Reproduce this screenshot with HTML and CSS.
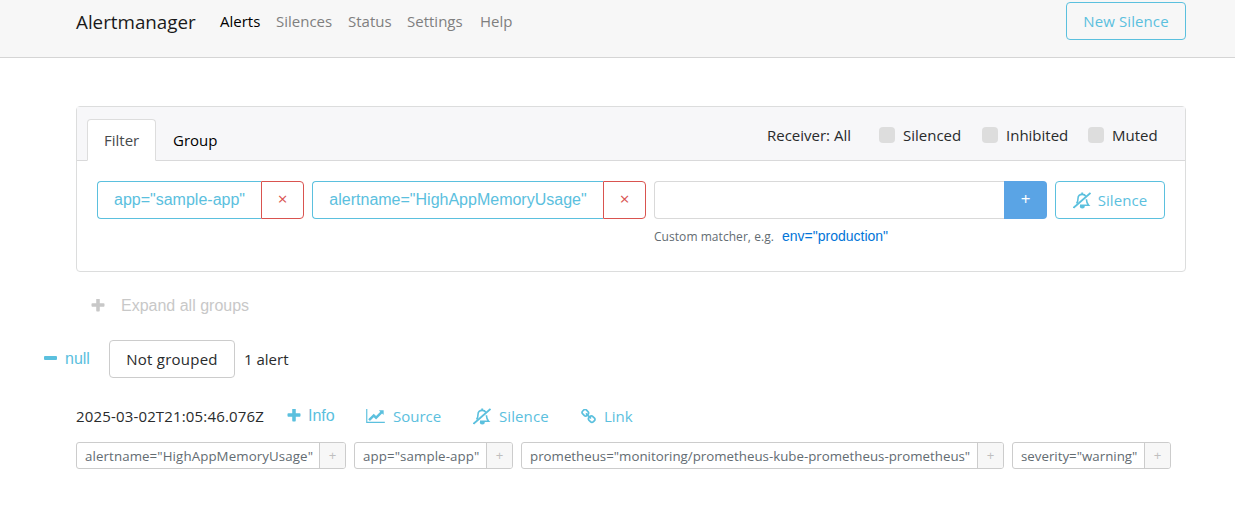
FILE: index.html
```html
<!DOCTYPE html>
<html lang="en">
<head>
<meta charset="utf-8">
<title>Alertmanager</title>
<link rel="stylesheet" href="styles.css">
</head>
<body>
<svg class="defs" aria-hidden="true">
  <symbol id="plus" viewBox="192 192 1408 1408"><path d="M1600 736v192q0 40-28 68t-68 28h-416v416q0 40-28 68t-68 28h-192q-40 0-68-28t-28-68v-416h-416q-40 0-68-28t-28-68v-192q0-40 28-68t68-28h416v-416q0-40 28-68t68-28h192q40 0 68 28t28 68v416h416q40 0 68 28t28 68z"/></symbol>
  <symbol id="minus" viewBox="0 0 13 4"><rect width="13" height="4" rx="1"/></symbol>
  <symbol id="chart" viewBox="0 128 2048 1536"><path d="M2048 1536v128h-2048v-1536h128v1408h1920zm-128-1248v435q0 21-19.5 29.5t-35.5-7.5l-121-121-633 633q-10 10-23 10t-23-10l-233-233-416 416-192-192 585-585q10-10 23-10t23 10l233 233 464-464-121-121q-16-16-7.5-35.5t29.5-19.5h435q14 0 23 9t9 23z"/></symbol>
  <symbol id="link" viewBox="64 64 1664 1664"><path d="M1520 1216q0-40-28-68l-208-208q-28-28-68-28-42 0-72 32 3 3 19 18.5t21.5 21.5 15 19 13 25.5 3.5 27.5q0 40-28 68t-68 28q-15 0-27.5-3.5t-25.5-13-19-15-21.5-21.5-18.5-19q-33 31-33 73 0 40 28 68l206 207q27 27 68 27 40 0 68-26l147-146q28-28 28-67zm-703-705q0-40-28-68l-206-207q-28-28-68-28-39 0-68 27l-147 146q-28 28-28 67 0 40 28 68l208 208q27 27 68 27 42 0 72-31-3-3-19-18.5t-21.5-21.5-15-19-13-25.5-3.5-27.5q0-40 28-68t68-28q15 0 27.5 3.5t25.5 13 19 15 21.5 21.5 18.5 19q33-31 33-73zm895 705q0 120-85 203l-147 146q-83 83-203 83-121 0-204-85l-206-207q-83-83-83-203 0-123 88-209l-88-88q-86 88-208 88-120 0-204-84l-208-208q-84-84-84-204t85-203l147-146q83-83 203-83 121 0 204 85l206 207q83 83 83 203 0 123-88 209l88 88q86-88 208-88 120 0 204 84l208 208q84 84 84 204z"/></symbol>
  <symbol id="bell-off" viewBox="0 0 18 17"><g fill="none" stroke="currentColor"><path d="M3.6 11.4C5 9.6 5 8 5 6.5C5 3.8 6.7 2.4 9.2 2.4C10.8 2.4 12.2 3.1 12.9 4.3M13.4 7.2C13.5 10 14.2 11.7 15.6 13.2H7" stroke-width="1.6"/><path d="M9.2 .5V2.4" stroke-width="1.9"/><path d="M.5 15.8 17.5 1" stroke-width="1.9"/></g><path d="M6.8 14H11.8A2.5 2.5 0 0 1 6.8 14Z"/></symbol>
</svg>

<header class="navbar">
  <a class="brand">Alertmanager</a>
  <nav class="nav">
    <a class="nav-alerts active">Alerts</a>
    <a class="nav-silences">Silences</a>
    <a class="nav-status">Status</a>
    <a class="nav-settings">Settings</a>
    <a class="nav-help">Help</a>
  </nav>
  <button class="btn new-silence">New Silence</button>
</header>

<main class="container">
  <section class="card">
    <div class="card-header">
      <div class="tabs">
        <a class="tab selected">Filter</a>
        <a class="tab group">Group</a>
      </div>
      <div class="options">
        <span class="receiver">Receiver: All</span>
        <label class="check silenced"><i class="box"></i><span>Silenced</span></label>
        <label class="check inhibited"><i class="box"></i><span>Inhibited</span></label>
        <label class="check muted"><i class="box"></i><span>Muted</span></label>
      </div>
    </div>
    <div class="card-body">
      <div class="chip"><button class="btn arial chip-app">app="sample-app"</button><button class="btn remove">×</button></div>
      <div class="chip"><button class="btn arial chip-name">alertname="HighAppMemoryUsage"</button><button class="btn remove">×</button></div>
      <div class="matcher">
        <div class="input-group"><input class="input" type="text"><button class="add">+</button></div>
        <small class="hint"><span class="hint-text">Custom matcher, e.g.</span><a class="example">env="production"</a></small>
      </div>
      <button class="btn silence-btn"><svg class="bell"><use href="#bell-off"/></svg><span>Silence</span></button>
    </div>
  </section>

  <div class="expand"><svg class="plus"><use href="#plus"/></svg><span>Expand all groups</span></div>

  <div class="group-row">
    <a class="null"><svg class="minus"><use href="#minus"/></svg><span>null</span></a>
    <span class="not-grouped">Not grouped</span>
    <span class="count">1 alert</span>
  </div>

  <div class="alert-row">
    <span class="time">2025-03-02T21:05:46.076Z</span>
    <a class="action info arial"><svg class="plus"><use href="#plus"/></svg><span>Info</span></a>
    <a class="action source"><svg class="chart"><use href="#chart"/></svg><span>Source</span></a>
    <a class="action silence"><svg class="bell"><use href="#bell-off"/></svg><span>Silence</span></a>
    <a class="action link"><svg class="chain"><use href="#link"/></svg><span>Link</span></a>
  </div>

  <div class="labels">
    <div class="label l-name"><span>alertname="HighAppMemoryUsage"</span><b>+</b></div>
    <div class="label l-app"><span>app="sample-app"</span><b>+</b></div>
    <div class="label l-prom"><span>prometheus="monitoring/prometheus-kube-prometheus-prometheus"</span><b>+</b></div>
    <div class="label l-sev"><span>severity="warning"</span><b>+</b></div>
  </div>
</main>
</body>
</html>
```
FILE: styles.css
```css
* { box-sizing: border-box; }
body {
  margin: 0;
  height: 505px;
  overflow: hidden;
  background: #fff;
  color: #292b2c;
  font: 15px/24px "Open Sans", "Noto Sans", sans-serif;
  white-space: nowrap;
}
.defs { display: none; }
svg { display: block; flex: none; fill: currentColor; }
button, input { font: inherit; margin: 0; padding: 0; }

.navbar {
  height: 58px;
  padding: 2px 49px 0 76px;
  display: flex;
  align-items: flex-start;
  background: #f7f7f7;
  border-bottom: 1px solid #d5d5d5;
}
.brand { width: 144px; padding-top: 8px; font-size: 18.8px; color: #1a1a1a; }
.nav { display: flex; padding-top: 7px; color: #7f7f7f; }
.active { color: #000; }
.nav-alerts { width: 56px; }
.nav-silences { width: 72px; }
.nav-status { width: 59px; }
.nav-settings { width: 73px; }

.btn {
  display: flex;
  align-items: center;
  justify-content: center;
  height: 38px;
  color: #5bc0de;
  background: transparent;
  border: 1px solid #5bc0de;
  border-radius: 4px;
}
.new-silence { width: 120px; margin-left: auto; letter-spacing: .1px; }
.arial { font-family: "Liberation Sans", Arial, sans-serif; font-size: 16px; }

.container { width: 1110px; margin: 48px 0 0 76px; }
.card { height: 166px; border: 1px solid #dcdddd; border-radius: 4px; }
.card-header {
  height: 54px;
  padding: 12px 26px 0 10px;
  display: flex;
  justify-content: space-between;
  background: #f7f7f9;
  border-bottom: 1px solid #d9d9da;
}
.tabs { display: flex; }
.tab { width: 69px; height: 42px; padding: 8px 16px; border: 1px solid transparent; color: #000; }
.selected { background: #fff; border-color: #ddd #ddd #fff; border-radius: 4px 4px 0 0; color: #464a4c; }
.options { display: flex; padding-top: 4px; }
.receiver { width: 112px; }
.check { display: flex; align-items: center; height: 24px; gap: 8px; }
.box { width: 16px; height: 16px; background: #ddd; border-radius: 4px; }
.silenced { width: 103px; }
.inhibited { width: 106px; }
.muted { width: 71px; }

.card-body { display: flex; align-items: flex-start; gap: 8px; padding: 20px; }
.chip { display: flex; }
.chip .btn:first-child { border-radius: 4px 0 0 4px; border-right: 0; }
.chip-app { width: 164px; }
.chip-name { width: 291px; }
.chip .remove { width: 43px; padding-bottom: 2px; color: #d9534f; border-color: #d9534f; border-radius: 0 4px 4px 0; font-size: 17px; }
.matcher { width: 393px; }
.input-group { display: flex; }
.input { width: 350px; height: 38px; border: 1px solid #d9d9d9; border-right: 0; border-radius: 4px 0 0 4px; background: #fff; outline: 0; }
.add { width: 43px; height: 38px; padding-bottom: 2px; border: 0; border-radius: 0 4px 4px 0; background: #5aa4e5; color: #fff; font-size: 17px; }
.hint { display: flex; padding-top: 5px; font-size: 12px; color: #636c72; }
.hint-text { width: 128px; padding-top: 1px; letter-spacing: .05px; }
.example { font: 14px/24px "Liberation Sans", Arial, sans-serif; color: #0275d8; }
.silence-btn { width: 110px; gap: 7px; }
.silence-btn, .silence { letter-spacing: .1px; }
.bell { width: 18px; height: 17px; }

.expand { display: flex; align-items: center; height: 24px; margin-top: 22px; padding-left: 15px; gap: 16px; color: #c8c8c8; font: 16px/24px "Liberation Sans", Arial, sans-serif; }
.plus { width: 14px; height: 13px; }
.expand .plus { margin-bottom: 2px; }
.group-row { display: flex; align-items: center; height: 38px; margin: 22px 0 0 -32px; }
.null { display: flex; align-items: center; width: 65px; gap: 8px; color: #5bc0de; font: 16px/24px "Liberation Sans", Arial, sans-serif; }
.minus { width: 13px; height: 4px; margin-bottom: 2px; }
.not-grouped { width: 126px; height: 38px; display: flex; align-items: center; justify-content: center; border: 1px solid #ccc; border-radius: 4px; letter-spacing: .25px; }
.count { padding-left: 9px; }

.alert-row { display: flex; height: 24px; margin-top: 26px; }
.time { width: 211px; letter-spacing: .16px; }
.action { display: flex; align-items: center; gap: 8px; color: #5bc0de; }
.info { width: 79px; gap: 7px; }
.info .plus { margin-bottom: 2px; }
.source { width: 107px; }
.chart { width: 19px; height: 14px; }
.silence { width: 108px; }
.chain { width: 15px; height: 15px; }

.labels { display: flex; gap: 8px; margin-top: 14px; }
.label { display: flex; height: 27px; border: 1px solid #ccc; border-radius: 3px; color: #636c72; font-size: 13.3px; line-height: 26px; overflow: hidden; }
.label span { flex: 1; padding-left: 8px; }
.label b { width: 26px; border-left: 1px solid #ccc; background: #f7f7f7; color: #bfbfbf; line-height: 25px; text-align: center; font-weight: 400; }
.l-name { width: 270px; letter-spacing: .1px; }
.l-app { width: 159px; letter-spacing: .1px; }
.l-prom { width: 483px; }
.l-sev { width: 159px; }
```
